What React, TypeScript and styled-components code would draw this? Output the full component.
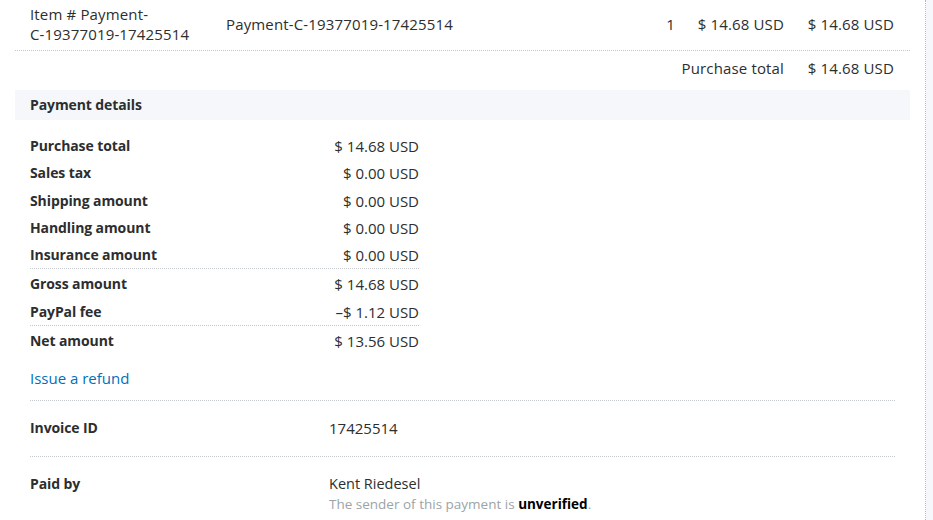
import React from "react";
import styled, { createGlobalStyle } from "styled-components";

const Global = createGlobalStyle`
  html, body { margin: 0; padding: 0; }
  body {
    background: #f5f7fa;
    font-family: "Open Sans", "Noto Sans", sans-serif;
    font-size: 15px;
    color: #2c2e2f;
    overflow: hidden;
    height: 520px;
  }
`;

const Page = styled.div`
  display: flex;
  height: 520px;
`;

const Panel = styled.main`
  width: 926px;
  background: #fff;
  border-right: 1px dotted #b7bcc0;
  padding: 0 15px;
  box-sizing: border-box;
  overflow: hidden;
`;

const TableRow = styled.div<{ $pad: string; $border?: boolean }>`
  display: grid;
  grid-template-columns: 211px 1fr 30px 109px 110px;
  padding: ${(p) => p.$pad};
  padding-right: 16px;
  line-height: 20px;
  align-items: center;
  border-bottom: ${(p) => (p.$border ? "1px dotted #c4c8cc" : "none")};
`;

const Cell = styled.div<{ $right?: boolean }>`
  text-align: ${(p) => (p.$right ? "right" : "left")};
  white-space: nowrap;
  letter-spacing: 0.15px;
`;

const ItemCell = styled(Cell)`
  padding-left: 15px;
  white-space: normal;
`;

const NoBreak = styled.span`
  white-space: nowrap;
`;

const SectionHeader = styled.h2`
  margin: 0;
  height: 30px;
  line-height: 30px;
  background: #f5f7fa;
  padding-left: 15px;
  font-size: 14px;
  font-weight: 700;
  letter-spacing: -0.1px;
`;

const Details = styled.div`
  padding: 12px 15px 0;
`;

const Breakdown = styled.div`
  width: 389px;
`;

const Group = styled.div<{ $border?: boolean; $first?: boolean }>`
  padding-top: ${(p) => (p.$first ? "0" : "1px")};
  border-bottom: ${(p) => (p.$border ? "1px dotted #c4c8cc" : "none")};
`;

const AmountRow = styled.div`
  display: flex;
  justify-content: space-between;
  height: 27.25px;
  padding-top: 4px;
  box-sizing: border-box;
  line-height: 20px;
`;

const Label = styled.span`
  font-weight: 700;
  font-size: 14px;
  letter-spacing: -0.1px;
`;

const Value = styled.span`
  text-align: right;
`;

const RefundLink = styled.a`
  display: block;
  color: #0070ba;
  text-decoration: none;
  line-height: 20px;
  margin-top: 14px;
  padding-bottom: 12px;
  border-bottom: 1px dotted #c4c8cc;
`;

const InfoRow = styled.div<{ $border?: boolean }>`
  display: grid;
  grid-template-columns: 299px 1fr;
  padding: 17px 0 ${(p) => (p.$border ? "18px" : "0")};
  line-height: 20px;
  border-bottom: ${(p) => (p.$border ? "1px dotted #c4c8cc" : "none")};
`;

const InfoValue = styled.div`
  display: flex;
  flex-direction: column;
`;

const Name = styled.span`
  font-size: 14.5px;
`;

const Muted = styled.span`
  color: #9da3a6;
  font-size: 13.5px;
`;

const Strong = styled.b`
  color: #000;
  font-weight: 700;
`;

const breakdown: { label: string; value: string }[][] = [
  [
    { label: "Purchase total", value: "$ 14.68 USD" },
    { label: "Sales tax", value: "$ 0.00 USD" },
    { label: "Shipping amount", value: "$ 0.00 USD" },
    { label: "Handling amount", value: "$ 0.00 USD" },
    { label: "Insurance amount", value: "$ 0.00 USD" },
  ],
  [
    { label: "Gross amount", value: "$ 14.68 USD" },
    { label: "PayPal fee", value: "\u2013$ 1.12 USD" },
  ],
  [{ label: "Net amount", value: "$ 13.56 USD" }],
];

export default function App() {
  return (
    <>
      <Global />
      <Page>
        <Panel>
          <TableRow $pad="4px 0 6px" $border>
            <ItemCell>
              Item # Payment- <NoBreak>C-19377019-17425514</NoBreak>
            </ItemCell>
            <Cell>Payment-C-19377019-17425514</Cell>
            <Cell $right>1</Cell>
            <Cell $right>$ 14.68 USD</Cell>
            <Cell $right>$ 14.68 USD</Cell>
          </TableRow>
          <TableRow $pad="7px 0 12px">
            <Cell />
            <Cell />
            <Cell />
            <Cell $right>Purchase total</Cell>
            <Cell $right>$ 14.68 USD</Cell>
          </TableRow>
          <SectionHeader>Payment details</SectionHeader>
          <Details>
            <Breakdown>
              {breakdown.map((group, gi) => (
                <Group key={gi} $first={gi === 0} $border={gi < breakdown.length - 1}>
                  {group.map((r) => (
                    <AmountRow key={r.label}>
                      <Label>{r.label}</Label>
                      <Value>{r.value}</Value>
                    </AmountRow>
                  ))}
                </Group>
              ))}
            </Breakdown>
            <RefundLink href="#">Issue a refund</RefundLink>
            <InfoRow $border>
              <Label>Invoice ID</Label>
              <InfoValue>17425514</InfoValue>
            </InfoRow>
            <InfoRow>
              <Label>Paid by</Label>
              <InfoValue>
                <Name>Kent Riedesel</Name>
                <Muted>
                  The sender of this payment is <Strong>unverified</Strong>.
                </Muted>
              </InfoValue>
            </InfoRow>
          </Details>
        </Panel>
      </Page>
    </>
  );
}
